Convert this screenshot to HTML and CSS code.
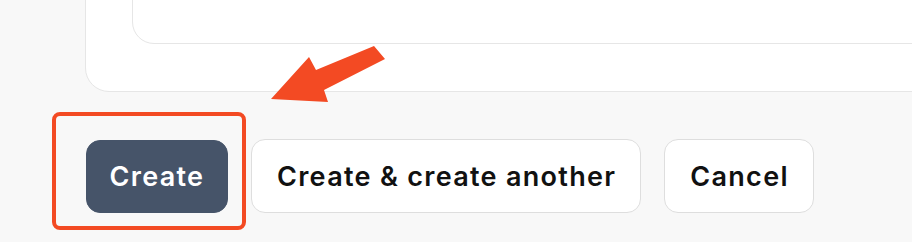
FILE: index.html
```html
<!DOCTYPE html>
<html>
<head>
<meta charset="utf-8">
<link rel="stylesheet" href="styles.css">
</head>
<body>
<div class="page">
  <div class="form-card">
    <div class="field-box"></div>
  </div>
  <div class="actions">
    <span class="highlight"></span>
    <button class="btn btn-primary">Create</button>
    <button class="btn">Create &amp; create another</button>
    <button class="btn">Cancel</button>
  </div>
  <svg class="arrow" width="912" height="242" viewBox="0 0 912 242">
    <polygon points="374,46 316,70 309,57 271,99 328,102 324,90 385,59" fill="#f34a23"/>
  </svg>
</div>
</body>
</html>
```
FILE: styles.css
```css
html, body {
  margin: 0;
  padding: 0;
  background: #f8f8f8;
}
.page {
  position: relative;
  width: 912px;
  height: 242px;
  overflow: hidden;
  font-family: "Inter", "Liberation Sans", sans-serif;
}
.form-card {
  box-sizing: border-box;
  margin-top: -40px;
  margin-left: 85px;
  width: 900px;
  height: 132px;
  background: #fff;
  border: 1px solid #e6e6e6;
  border-radius: 24px;
  padding: 0 0 47px 46px;
  display: flex;
  flex-direction: column;
  justify-content: flex-end;
}
.field-box {
  box-sizing: border-box;
  height: 80px;
  width: 900px;
  border: 1px solid #e6e6e6;
  border-radius: 22px;
  background: #fff;
}
.actions {
  position: relative;
  display: flex;
  gap: 23px;
  margin-top: 47px;
  margin-left: 86px;
}
.btn {
  box-sizing: border-box;
  height: 74px;
  padding: 0 24px 0 25px;
  font-family: inherit;
  font-size: 27px;
  font-weight: 600;
  letter-spacing: 1.3px;
  color: #111;
  background: #fff;
  border: 1px solid #dedede;
  border-radius: 14px;
}
.btn-primary {
  width: 142px;
  padding: 0;
  background: #465469;
  border-color: #465469;
  color: #fff;
  height: 73px;
  margin-top: 1px;
}
.highlight {
  position: absolute;
  left: -34px;
  top: -27px;
  width: 194px;
  height: 118px;
  box-sizing: border-box;
  border: 4px solid #f34a23;
  border-radius: 8px;
}
.arrow {
  position: absolute;
  left: 0;
  top: 0;
}
```
